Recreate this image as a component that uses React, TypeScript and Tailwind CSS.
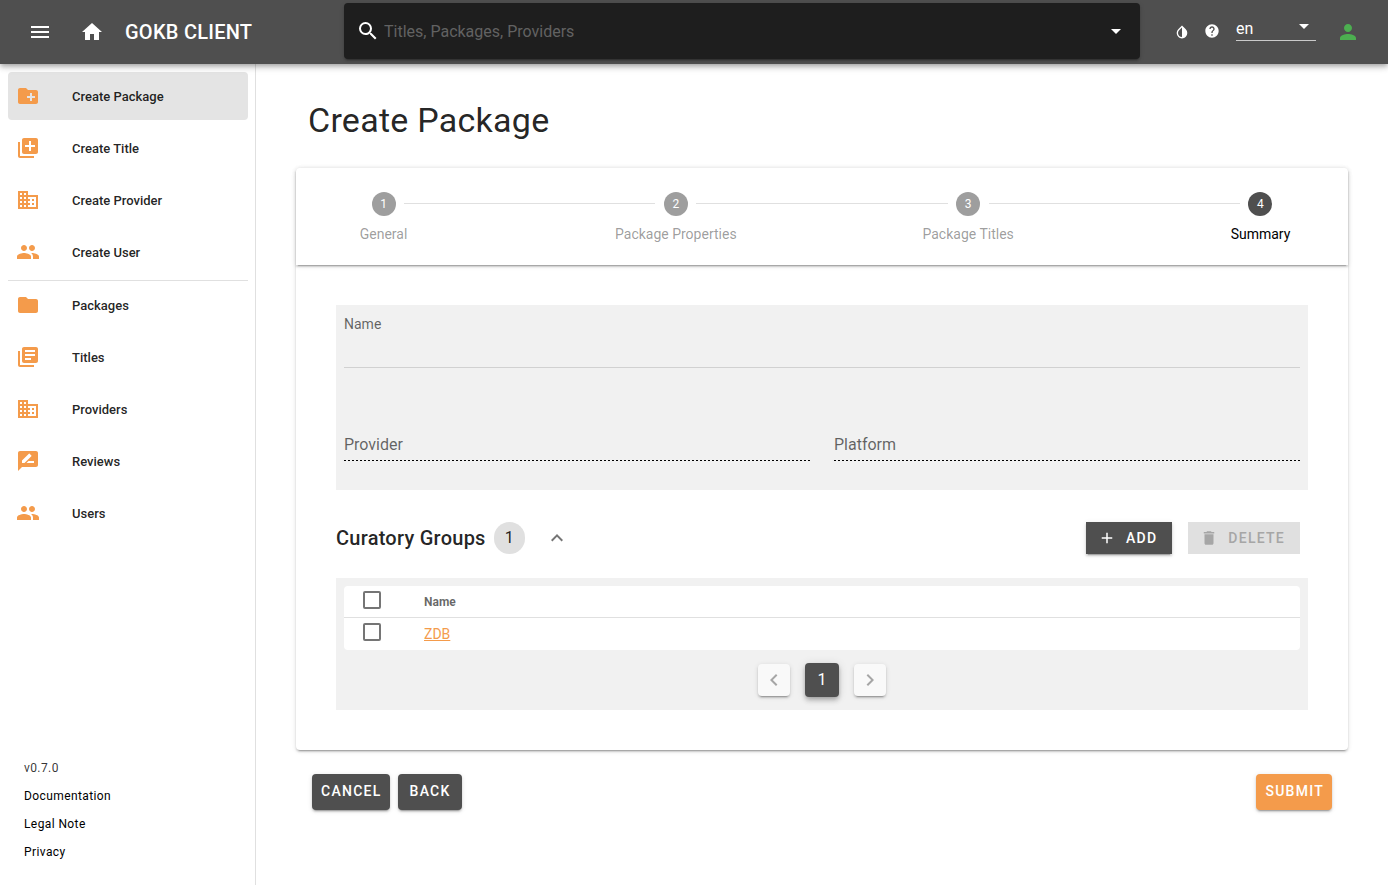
import React, { useState } from "react";
import type { IconType } from "react-icons";
import {
  MdAdd,
  MdArrowDropDown,
  MdBusiness,
  MdChevronLeft,
  MdChevronRight,
  MdCreateNewFolder,
  MdDelete,
  MdFolder,
  MdHelp,
  MdHome,
  MdKeyboardArrowUp,
  MdLibraryAdd,
  MdLibraryBooks,
  MdMenu,
  MdPeople,
  MdPerson,
  MdRateReview,
  MdSearch,
} from "react-icons/md";

type NavItem = { label: string; icon: IconType; active?: boolean };

const createItems: NavItem[] = [
  { label: "Create Package", icon: MdCreateNewFolder, active: true },
  { label: "Create Title", icon: MdLibraryAdd },
  { label: "Create Provider", icon: MdBusiness },
  { label: "Create User", icon: MdPeople },
];

const browseItems: NavItem[] = [
  { label: "Packages", icon: MdFolder },
  { label: "Titles", icon: MdLibraryBooks },
  { label: "Providers", icon: MdBusiness },
  { label: "Reviews", icon: MdRateReview },
  { label: "Users", icon: MdPeople },
];

const steps = ["General", "Package Properties", "Package Titles", "Summary"];

const raised =
  "shadow-[0_3px_1px_-2px_rgba(0,0,0,0.2),0_2px_2px_0_rgba(0,0,0,0.14),0_1px_5px_0_rgba(0,0,0,0.12)]";

function InvertColorsIcon() {
  return (
    <svg viewBox="0 0 24 24" className="size-4" fill="currentColor" aria-hidden="true">
      <path d="M12 19.58c-1.6 0-3.11-.62-4.24-1.75C6.62 16.69 6 15.19 6 13.58 6 12 6.62 10.47 7.76 9.34L12 5.1v14.48zM17.66 7.93 12 2.27 6.34 7.93c-3.12 3.12-3.12 8.19 0 11.31 1.56 1.56 3.61 2.34 5.66 2.34s4.1-.78 5.66-2.34c3.12-3.12 3.12-8.19 0-11.31z" />
    </svg>
  );
}

function NavList({ items }: { items: NavItem[] }) {
  return (
    <ul>
      {items.map(({ label, icon: Icon, active }) => (
        <li key={label} className="mb-1">
          <a
            href="#"
            aria-current={active ? "page" : undefined}
            className={
              active
                ? "flex h-12 items-center gap-8 rounded bg-[#e4e4e4] px-2"
                : "flex h-12 items-center gap-8 rounded px-2"
            }
          >
            <Icon className="size-6 text-[#f49b4b]" />
            <span className="pt-0.5 text-[13px] leading-4 font-medium">{label}</span>
          </a>
        </li>
      ))}
    </ul>
  );
}

function Header() {
  return (
    <header className="relative z-10 flex h-16 items-center bg-[#4f4f4f] text-white shadow-[0_2px_4px_-1px_rgba(0,0,0,0.2),0_4px_5px_0_rgba(0,0,0,0.14),0_1px_10px_0_rgba(0,0,0,0.12)]">
      <div className="flex w-[344px] shrink-0 items-center pl-4">
        <button type="button" aria-label="Menu" className="flex size-12 items-center justify-center">
          <MdMenu className="size-6" />
        </button>
        <a href="#" aria-label="Home" className="ml-1 flex size-12 items-center justify-center">
          <MdHome className="size-6" />
        </a>
        <a href="#" className="ml-[9px] text-xl font-medium tracking-[0.0125em]">
          GOKB CLIENT
        </a>
      </div>
      <div className={`mb-0.5 flex h-14 flex-1 items-center rounded bg-[#1e1e1e] px-3 ${raised}`}>
        <MdSearch className="size-6" />
        <input
          type="text"
          aria-label="Search"
          placeholder="Titles, Packages, Providers"
          className="ml-1 min-w-0 flex-1 bg-transparent pt-0.5 text-base outline-none placeholder:text-[#626262]"
        />
        <button type="button" aria-label="Search options">
          <MdArrowDropDown className="size-6" />
        </button>
      </div>
      <div className="flex w-[248px] shrink-0 items-center pl-[34px]">
        <button type="button" aria-label="Toggle dark mode">
          <InvertColorsIcon />
        </button>
        <button type="button" aria-label="Help" className="mb-0.5 ml-3.5">
          <MdHelp className="size-4" />
        </button>
        <div className="relative mb-1.5 ml-4 w-20">
          <select
            aria-label="Language"
            defaultValue="en"
            className="h-6 w-full appearance-none border-b border-white/70 bg-transparent text-base leading-5 outline-none"
          >
            <option>en</option>
            <option>de</option>
          </select>
          <MdArrowDropDown className="pointer-events-none absolute -top-[3px] right-0 size-6" />
        </div>
        <button type="button" aria-label="Account" className="ml-5">
          <MdPerson className="size-6 text-[#4caf50]" />
        </button>
      </div>
    </header>
  );
}

function Sidebar() {
  return (
    <aside className="flex w-64 shrink-0 flex-col justify-between border-r border-[#e0e0e0]">
      <nav className="py-2 pr-[7px] pl-2">
        <NavList items={createItems} />
        <hr className="border-[#e0e0e0]" />
        <NavList items={browseItems} />
      </nav>
      <div className="flex flex-col px-6 pb-[19px] text-xs leading-7 tracking-[0.0333em] text-black">
        <span className="text-black/80">v0.7.0</span>
        <a href="#">Documentation</a>
        <a href="#">Legal Note</a>
        <a href="#">Privacy</a>
      </div>
    </aside>
  );
}

function Stepper({ current }: { current: number }) {
  return (
    <ol className={`flex justify-between rounded-t pt-6 pb-[21px] ${raised}`}>
      {steps.map((label, index) => (
        <React.Fragment key={label}>
          {index > 0 && (
            <li aria-hidden="true" className="-mx-[67px] mt-[11px] h-px flex-1 bg-[#e0e0e0]" />
          )}
          <li
            aria-current={index === current ? "step" : undefined}
            className="flex w-[175px] flex-col items-center gap-2"
          >
            <span
              className={
                index === current
                  ? "flex size-6 items-center justify-center rounded-full bg-[#4f4f4f] text-xs text-white"
                  : "flex size-6 items-center justify-center rounded-full bg-[#9e9e9e] text-xs text-white"
              }
            >
              {index + 1}
            </span>
            <span className={index === current ? "text-sm text-black" : "text-sm text-black/40"}>
              {label}
            </span>
          </li>
        </React.Fragment>
      ))}
    </ol>
  );
}

function LockedField({ id, label }: { id: string; label: string }) {
  return (
    <div className="relative flex-1">
      <input
        id={id}
        readOnly
        className="block h-8 w-full bg-[repeating-linear-gradient(90deg,#000_0_2px,transparent_2px_4px)] bg-[length:100%_1px] bg-bottom bg-no-repeat outline-none"
      />
      <label htmlFor={id} className="absolute top-1 left-0 text-base text-black/60">
        {label}
      </label>
    </div>
  );
}

function Checkbox({ label }: { label: string }) {
  return (
    <input
      type="checkbox"
      aria-label={label}
      className="mb-1 block size-[18px] appearance-none rounded-xs border-2 border-[#757575] checked:bg-[#757575]"
    />
  );
}

function CuratoryGroups() {
  const [open, setOpen] = useState(true);
  return (
    <section className="mt-8">
      <div className="flex h-8 items-center pr-2">
        <h2 className="text-xl font-medium tracking-[0.0125em]">Curatory Groups</h2>
        <span className="ml-2 flex h-8 items-center rounded-full bg-[#e0e0e0] px-[11px]">1</span>
        <button
          type="button"
          aria-label="Toggle curatory groups"
          aria-expanded={open}
          onClick={() => setOpen(!open)}
          className="ml-5"
        >
          <MdKeyboardArrowUp className="size-6 text-[#757575]" />
        </button>
        <div className="ml-auto flex gap-4 text-sm font-medium tracking-[0.09em]">
          <button
            type="button"
            className={`flex h-8 items-center gap-2.5 bg-[#4f4f4f] pr-[15px] pl-3 text-white ${raised}`}
          >
            <MdAdd className="size-[18px]" />
            ADD
          </button>
          <button
            type="button"
            disabled
            className="flex h-8 items-center gap-2.5 bg-[#e0e0e0] pr-[15px] pl-3 text-[#a6a6a6]"
          >
            <MdDelete className="size-[18px]" />
            DELETE
          </button>
        </div>
      </div>
      {open && (
        <div className="mt-6 bg-[#f1f1f1] px-2 pt-2 pb-[13px]">
          <div className="overflow-hidden rounded bg-white">
            <table className="w-full table-fixed border-separate border-spacing-0 text-left">
              <thead>
                <tr>
                  <th className="h-8 w-16 border-b border-[#e0e0e0] pl-[19px]">
                    <Checkbox label="Select all" />
                  </th>
                  <th className="h-8 border-b border-[#e0e0e0] pl-4 text-xs font-bold text-black/60">
                    Name
                  </th>
                </tr>
              </thead>
              <tbody>
                <tr>
                  <td className="h-8 pl-[19px]">
                    <Checkbox label="Select ZDB" />
                  </td>
                  <td className="h-8 pl-4 text-sm">
                    <a href="#" className="text-[#f49b4b] underline">
                      ZDB
                    </a>
                  </td>
                </tr>
              </tbody>
            </table>
          </div>
          <nav aria-label="Pagination" className="mt-[13px] flex items-center justify-center gap-[15px]">
            <button
              type="button"
              disabled
              aria-label="Previous page"
              className={`flex size-8 items-center justify-center rounded bg-[#f9f9f9] text-[#a6a6a6] ${raised}`}
            >
              <MdChevronLeft className="size-6" />
            </button>
            <button
              type="button"
              aria-current="page"
              className="size-[34px] rounded bg-[#4f4f4f] text-base text-white shadow-[0_2px_4px_-1px_rgba(0,0,0,0.2),0_4px_5px_0_rgba(0,0,0,0.14),0_1px_10px_0_rgba(0,0,0,0.12)]"
            >
              1
            </button>
            <button
              type="button"
              disabled
              aria-label="Next page"
              className={`flex size-8 items-center justify-center rounded bg-[#f9f9f9] text-[#a6a6a6] ${raised}`}
            >
              <MdChevronRight className="size-6" />
            </button>
          </nav>
        </div>
      )}
    </section>
  );
}

export default function App() {
  return (
    <div className="flex min-h-screen flex-col bg-white font-[Roboto,sans-serif] text-black/87">
      <Header />
      <div className="flex flex-1">
        <Sidebar />
        <main className="min-w-0 flex-1 px-10 pt-8 pb-10">
          <h1 className="pl-3 text-[34px] leading-[48px] tracking-[0.0075em]">Create Package</h1>
          <form onSubmit={(event) => event.preventDefault()}>
            <div className={`mt-6 rounded bg-white ${raised}`}>
              <Stepper current={3} />
              <div className="p-10">
                <section className="bg-[#f1f1f1] px-2 pt-[9px] pb-[29px]">
                  <label htmlFor="name" className="block text-sm text-black/60">
                    Name
                  </label>
                  <input
                    id="name"
                    readOnly
                    className="block h-[34px] w-full border-b border-[#d1d1d1] bg-transparent outline-none"
                  />
                  <div className="mt-[61px] flex gap-6">
                    <LockedField id="provider" label="Provider" />
                    <LockedField id="platform" label="Platform" />
                  </div>
                </section>
                <CuratoryGroups />
              </div>
            </div>
            <div className="mt-6 flex gap-2 px-4 text-sm font-medium tracking-[0.09em] text-white">
              <button
                type="button"
                className={`h-9 rounded bg-[#4f4f4f] pr-2 pb-0.5 pl-[9px] ${raised}`}
              >
                CANCEL
              </button>
              <button
                type="button"
                className={`h-9 rounded bg-[#4f4f4f] pr-[11px] pb-0.5 pl-3 ${raised}`}
              >
                BACK
              </button>
              <button
                type="submit"
                className={`ml-auto h-9 rounded bg-[#f49b4b] pr-2 pb-0.5 pl-[9px] ${raised}`}
              >
                SUBMIT
              </button>
            </div>
          </form>
        </main>
      </div>
    </div>
  );
}
